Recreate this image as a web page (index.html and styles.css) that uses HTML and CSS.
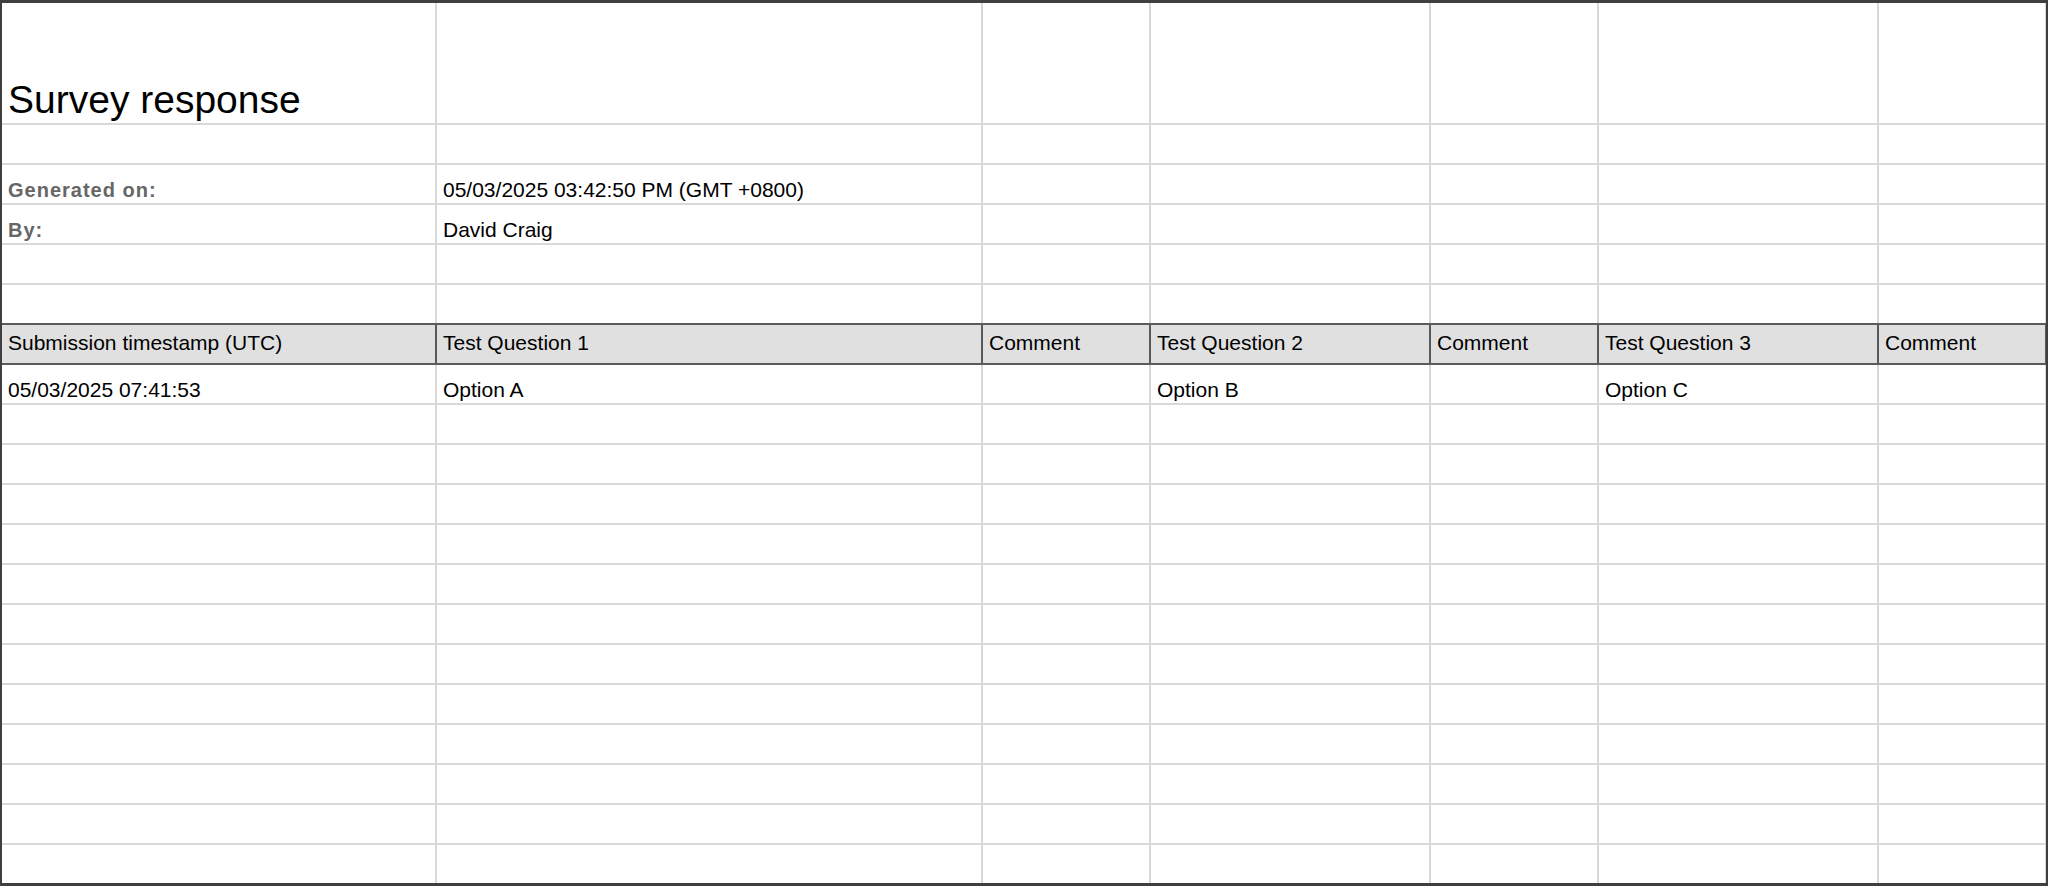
FILE: index.html
```html
<!DOCTYPE html>
<html lang="en">
<head>
<meta charset="utf-8">
<title>Survey response</title>
<link rel="stylesheet" href="styles.css">
</head>
<body>
<div class="sheet">
  <div class="row title">
    <div class="cell title-cell">Survey response</div><div class="cell"></div><div class="cell"></div><div class="cell"></div><div class="cell"></div><div class="cell"></div><div class="cell"></div>
  </div>
  <div class="row"><div class="cell"></div><div class="cell"></div><div class="cell"></div><div class="cell"></div><div class="cell"></div><div class="cell"></div><div class="cell"></div></div>
  <div class="row">
    <div class="cell label">Generated on:</div><div class="cell">05/03/2025 03:42:50 PM (GMT +0800)</div><div class="cell"></div><div class="cell"></div><div class="cell"></div><div class="cell"></div><div class="cell"></div>
  </div>
  <div class="row">
    <div class="cell label">By:</div><div class="cell">David Craig</div><div class="cell"></div><div class="cell"></div><div class="cell"></div><div class="cell"></div><div class="cell"></div>
  </div>
  <div class="row"><div class="cell"></div><div class="cell"></div><div class="cell"></div><div class="cell"></div><div class="cell"></div><div class="cell"></div><div class="cell"></div></div>
  <div class="row"><div class="cell"></div><div class="cell"></div><div class="cell"></div><div class="cell"></div><div class="cell"></div><div class="cell"></div><div class="cell"></div></div>
  <div class="row head">
    <div class="cell">Submission timestamp (UTC)</div><div class="cell">Test Question 1</div><div class="cell">Comment</div><div class="cell">Test Question 2</div><div class="cell">Comment</div><div class="cell">Test Question 3</div><div class="cell">Comment</div>
  </div>
  <div class="row">
    <div class="cell">05/03/2025 07:41:53</div><div class="cell">Option A</div><div class="cell"></div><div class="cell">Option B</div><div class="cell"></div><div class="cell">Option C</div><div class="cell"></div>
  </div>
  <div class="row"><div class="cell"></div><div class="cell"></div><div class="cell"></div><div class="cell"></div><div class="cell"></div><div class="cell"></div><div class="cell"></div></div>
  <div class="row"><div class="cell"></div><div class="cell"></div><div class="cell"></div><div class="cell"></div><div class="cell"></div><div class="cell"></div><div class="cell"></div></div>
  <div class="row"><div class="cell"></div><div class="cell"></div><div class="cell"></div><div class="cell"></div><div class="cell"></div><div class="cell"></div><div class="cell"></div></div>
  <div class="row"><div class="cell"></div><div class="cell"></div><div class="cell"></div><div class="cell"></div><div class="cell"></div><div class="cell"></div><div class="cell"></div></div>
  <div class="row"><div class="cell"></div><div class="cell"></div><div class="cell"></div><div class="cell"></div><div class="cell"></div><div class="cell"></div><div class="cell"></div></div>
  <div class="row"><div class="cell"></div><div class="cell"></div><div class="cell"></div><div class="cell"></div><div class="cell"></div><div class="cell"></div><div class="cell"></div></div>
  <div class="row"><div class="cell"></div><div class="cell"></div><div class="cell"></div><div class="cell"></div><div class="cell"></div><div class="cell"></div><div class="cell"></div></div>
  <div class="row"><div class="cell"></div><div class="cell"></div><div class="cell"></div><div class="cell"></div><div class="cell"></div><div class="cell"></div><div class="cell"></div></div>
  <div class="row"><div class="cell"></div><div class="cell"></div><div class="cell"></div><div class="cell"></div><div class="cell"></div><div class="cell"></div><div class="cell"></div></div>
  <div class="row"><div class="cell"></div><div class="cell"></div><div class="cell"></div><div class="cell"></div><div class="cell"></div><div class="cell"></div><div class="cell"></div></div>
  <div class="row"><div class="cell"></div><div class="cell"></div><div class="cell"></div><div class="cell"></div><div class="cell"></div><div class="cell"></div><div class="cell"></div></div>
  <div class="row"><div class="cell"></div><div class="cell"></div><div class="cell"></div><div class="cell"></div><div class="cell"></div><div class="cell"></div><div class="cell"></div></div>
</div>
</body>
</html>
```
FILE: styles.css
```css
html, body {
  margin: 0;
  padding: 0;
  background: #ffffff;
}

.sheet {
  box-sizing: border-box;
  width: 2048px;
  height: 886px;
  display: flex;
  flex-direction: column;
  gap: 2px;
  background: #d9d9d9;
  border-style: solid;
  border-color: #3f3f3f;
  border-width: 3px 2px 3px 2px;
  overflow: hidden;
}

.row {
  display: grid;
  grid-template-columns: 433px 544px 166px 278px 166px 278px 166px;
  column-gap: 2px;
  padding-right: 1px;
  height: 38px;
  flex: none;
  background: #d9d9d9;
}

.row.title {
  height: 120px;
}

.row.head {
  background: #5a5a5a;
  box-shadow: 0 -2px 0 #5a5a5a, 0 2px 0 #5a5a5a;
}

.cell {
  background: #ffffff;
  display: flex;
  align-items: flex-end;
  padding: 0 6px 3px 6px;
  font-family: "Liberation Sans", Arial, sans-serif;
  font-size: 21px;
  line-height: 1;
  color: #000000;
  white-space: nowrap;
  overflow: hidden;
  min-width: 0;
}

.row.head .cell {
  background: #e0e0e0;
  padding-bottom: 10px;
}

.title-cell {
  font-size: 39px;
  padding-bottom: 4px;
}

.label {
  font-weight: bold;
  color: #666666;
  font-size: 20px;
  letter-spacing: 1px;
}
```
